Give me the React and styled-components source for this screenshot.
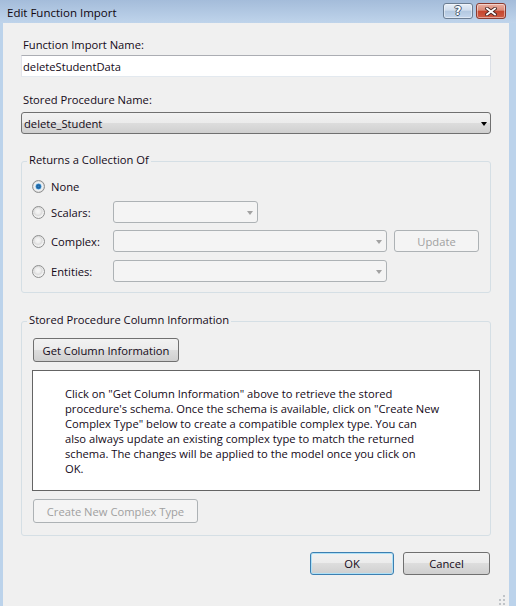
import React from 'react';
import styled, { createGlobalStyle, css } from 'styled-components';

const Global = createGlobalStyle`
  html, body { margin: 0; padding: 0; background: #b9d1ea; }
  * { box-sizing: border-box; }
`;

const FONT = `"Open Sans", "Noto Sans", sans-serif`;
const TEXT = '#140a18';

const Window = styled.div`
  width: 516px;
  height: 606px;
  display: flex;
  flex-direction: column;
  background: #bcd3eb;
  overflow: hidden;
  font-family: ${FONT};
  font-size: 11.2px;
  line-height: 15px;
  color: ${TEXT};
`;

const TitleBar = styled.div`
  height: 23px;
  flex: none;
  display: flex;
  align-items: center;
  padding: 0 10px 0 7px;
  background: linear-gradient(#a4bcda, #bfd4eb);
`;

const Title = styled.div`
  flex: 1;
  font-size: 11.5px;
  color: #10060f;
  padding-top: 1px;
`;

const CaptionButtons = styled.div`
  display: flex;
  gap: 3px;
  align-self: flex-start;
  margin-top: 3px;
`;

const CaptionButton = styled.div`
  width: 30px;
  height: 16px;
  border-radius: 3px;
  border: 1px solid ${p => (p.$close ? '#8a3b30' : '#6b7d92')};
  background: ${p =>
    p.$close
      ? 'linear-gradient(#eab0a3 0%, #d98a78 45%, #c5452d 50%, #cf5d46 100%)'
      : 'linear-gradient(#e6eef8 0%, #d0dded 45%, #b3c8e0 50%, #c4d6ec 100%)'};
  display: flex;
  align-items: center;
  justify-content: center;
  box-shadow: inset 0 0 0 1px rgba(255, 255, 255, 0.45);
`;

const HelpGlyph = styled.span`
  font-family: "DejaVu Sans", sans-serif;
  font-weight: bold;
  font-size: 12px;
  line-height: 12px;
  color: #fff;
  text-shadow: -1px 0 #46566b, 1px 0 #46566b, 0 -1px #46566b, 0 1px #46566b;
`;

const Frame = styled.div`
  flex: 1;
  display: flex;
  padding: 0 7px 0 3px;
`;

const Client = styled.div`
  flex: 1;
  min-width: 0;
  position: relative;
  background: #f0f0f0;
  display: flex;
  flex-direction: column;
  padding: 14px 18px 0;
`;

const Label = styled.div`
  margin: ${p => p.$mt || 0}px 0 ${p => p.$mb || 0}px 2px;
  line-height: 15px;
`;

const TextInput = styled.div`
  height: 22px;
  background: #fff;
  border: 1px solid;
  border-color: #abadb3 #dbdfe6 #e3e9ef #e2e3ea;
  padding: 0 1px;
  display: flex;
  align-items: center;
`;

const Combo = styled.div`
  height: 22px;
  width: ${p => (p.$w ? `${p.$w}px` : 'auto')};
  border-radius: 3px;
  display: flex;
  align-items: center;
  justify-content: space-between;
  padding: 0 ${p => p.$pr || 4}px 0 2px;
  ${p =>
    p.$disabled
      ? css`
          border: 1px solid #adb2b5;
          background: #f4f4f4;
        `
      : css`
          border: 1px solid #707070;
          background: linear-gradient(#f2f2f2 0%, #ebebeb 50%, #dddddd 50%, #cfcfcf 100%);
        `}
`;

const Arrow = styled.span`
  width: 0;
  height: 0;
  border-left: 3.5px solid transparent;
  border-right: 3.5px solid transparent;
  border-top: 4px solid ${p => (p.$disabled ? '#a2a2a2' : '#000')};
  margin-top: 1px;
`;

const Group = styled.fieldset`
  margin: ${p => p.$mt}px 0 0;
  padding: ${p => p.$pt}px 10px ${p => p.$pb}px;
  border: 1px solid #d5dfe5;
  border-radius: 3px;
  min-width: 0;
`;

const Legend = styled.legend`
  padding: 0 2px 4px;
  margin-left: -5px;
  line-height: 15px;
`;

const Options = styled.div`
  display: grid;
  grid-template-columns: 74px 274px 85px;
  column-gap: 7px;
  justify-content: start;
`;

const RadioCell = styled.label`
  grid-column: 1;
  height: 22px;
  margin-top: ${p => p.$mt || 0}px;
  display: flex;
  align-items: center;
  gap: 6px;
  white-space: nowrap;
`;

const Cell = styled.div`
  grid-column: ${p => p.$col};
  margin-top: ${p => p.$mt || 0}px;
  display: flex;
  align-items: center;
`;

const Radio = styled.span`
  width: 13px;
  height: 13px;
  flex: none;
  border-radius: 50%;
  border: 1px solid #8e8f8f;
  background: ${p =>
    p.$checked
      ? 'radial-gradient(circle at 50% 50%, #2d7fc0 0, #1c5d99 1.6px, #3b8fd0 2.6px, #cfe3f1 3.2px, #f2f2f2 4.2px, #d6d6d6 5.5px)'
      : 'radial-gradient(circle at 45% 40%, #f7f7f7 0, #eeeeee 2.5px, #dcdcdc 4px, #f2f2f2 5.5px)'};
`;

const Button = styled.button`
  height: ${p => p.$h}px;
  width: ${p => p.$w}px;
  margin: ${p => p.$mt || 0}px 0 0 ${p => p.$ml || 0}px;
  padding: 0 6px;
  border-radius: 3px;
  font-family: ${FONT};
  font-size: 11.2px;
  line-height: 15px;
  color: ${TEXT};
  border: 1px solid #707070;
  background: linear-gradient(#f2f2f2 0%, #ebebeb 50%, #dddddd 50%, #cfcfcf 100%);
  text-align: center;
  white-space: nowrap;
  flex: none;
  ${p =>
    p.disabled &&
    css`
      border-color: #adb2b5;
      background: #f4f4f4;
      color: #a0a0a0;
    `}
  ${p =>
    p.$default &&
    css`
      border-color: #3c7fb1;
      box-shadow: inset 0 0 0 1px #aee0f6;
    `}
`;

const InfoBox = styled.div`
  margin-top: 8px;
  height: 121px;
  background: #fff;
  border: 1px solid #646464;
  padding: 15px 0 0 32px;
  line-height: 15px;
`;

const Line = styled.div`
  white-space: nowrap;
`;

const Footer = styled.div`
  margin-top: 16px;
  display: flex;
  justify-content: flex-end;
  gap: 9px;
  padding-right: 1px;
`;

const Grip = styled.svg`
  position: absolute;
  right: 3px;
  bottom: 1px;
`;

function CloseGlyph() {
  const d = 'M2 1.5 L10 7.5 M10 1.5 L2 7.5';
  return (
    <svg width="12" height="9" viewBox="0 0 12 9">
      <path d={d} stroke="#4a2420" strokeWidth="3.6" strokeLinecap="square" fill="none" />
      <path d={d} stroke="#fff" strokeWidth="1.8" strokeLinecap="square" fill="none" />
    </svg>
  );
}

const infoLines = [
  'Click on "Get Column Information" above to retrieve the stored',
  'procedure\'s schema. Once the schema is available, click on "Create New',
  'Complex Type" below to create a compatible complex type. You can',
  'also always update an existing complex type to match the returned',
  'schema. The changes will be applied to the model once you click on',
  'OK.',
];

function DisabledCombo({ w }) {
  return (
    <Combo $disabled $w={w}>
      <span />
      <Arrow $disabled />
    </Combo>
  );
}

export default function App() {
  return (
    <>
      <Global />
      <Window>
        <TitleBar>
          <Title>Edit Function Import</Title>
          <CaptionButtons>
            <CaptionButton>
              <HelpGlyph>?</HelpGlyph>
            </CaptionButton>
            <CaptionButton $close>
              <CloseGlyph />
            </CaptionButton>
          </CaptionButtons>
        </TitleBar>
        <Frame>
          <Client>
            <Label $mb={3}>Function Import Name:</Label>
            <TextInput>deleteStudentData</TextInput>
            <Label $mt={15} $mb={5}>Stored Procedure Name:</Label>
            <Combo $pr={3}>
              <span>delete_Student</span>
              <Arrow />
            </Combo>

            <Group $mt={18} $pt={4} $pb={10}>
              <Legend>Returns a Collection Of</Legend>
              <Options>
                <RadioCell>
                  <Radio $checked />
                  None
                </RadioCell>

                <RadioCell $mt={4}>
                  <Radio />
                  Scalars:
                </RadioCell>
                <Cell $col={2} $mt={4}>
                  <DisabledCombo w={145} />
                </Cell>

                <RadioCell $mt={7}>
                  <Radio />
                  Complex:
                </RadioCell>
                <Cell $col={2} $mt={7}>
                  <DisabledCombo w={274} />
                </Cell>
                <Cell $col={3} $mt={7}>
                  <Button disabled $h={22} $w={85}>Update</Button>
                </Cell>

                <RadioCell $mt={8}>
                  <Radio />
                  Entities:
                </RadioCell>
                <Cell $col={2} $mt={8}>
                  <DisabledCombo w={274} />
                </Cell>
              </Options>
            </Group>

            <Group $mt={19} $pt={7} $pb={12}>
              <Legend>Stored Procedure Column Information</Legend>
              <Button $h={24} $w={146} $ml={1}>Get Column Information</Button>
              <InfoBox>
                {infoLines.map((l, i) => (
                  <Line key={i}>{l}</Line>
                ))}
              </InfoBox>
              <Button disabled $h={24} $w={165} $ml={1} $mt={8}>Create New Complex Type</Button>
            </Group>

            <Footer>
              <Button $default $h={23} $w={84}>OK</Button>
              <Button $h={23} $w={87}>Cancel</Button>
            </Footer>

            <Grip width="8" height="10" viewBox="0 0 8 10">
              {[
                [5, 0],
                [5, 4],
                [1, 4],
                [5, 8],
                [1, 8],
              ].map(([x, y], i) => (
                <rect key={i} x={x} y={y} width="2" height="2" fill="#c0c4c8" />
              ))}
            </Grip>
          </Client>
        </Frame>
      </Window>
    </>
  );
}
